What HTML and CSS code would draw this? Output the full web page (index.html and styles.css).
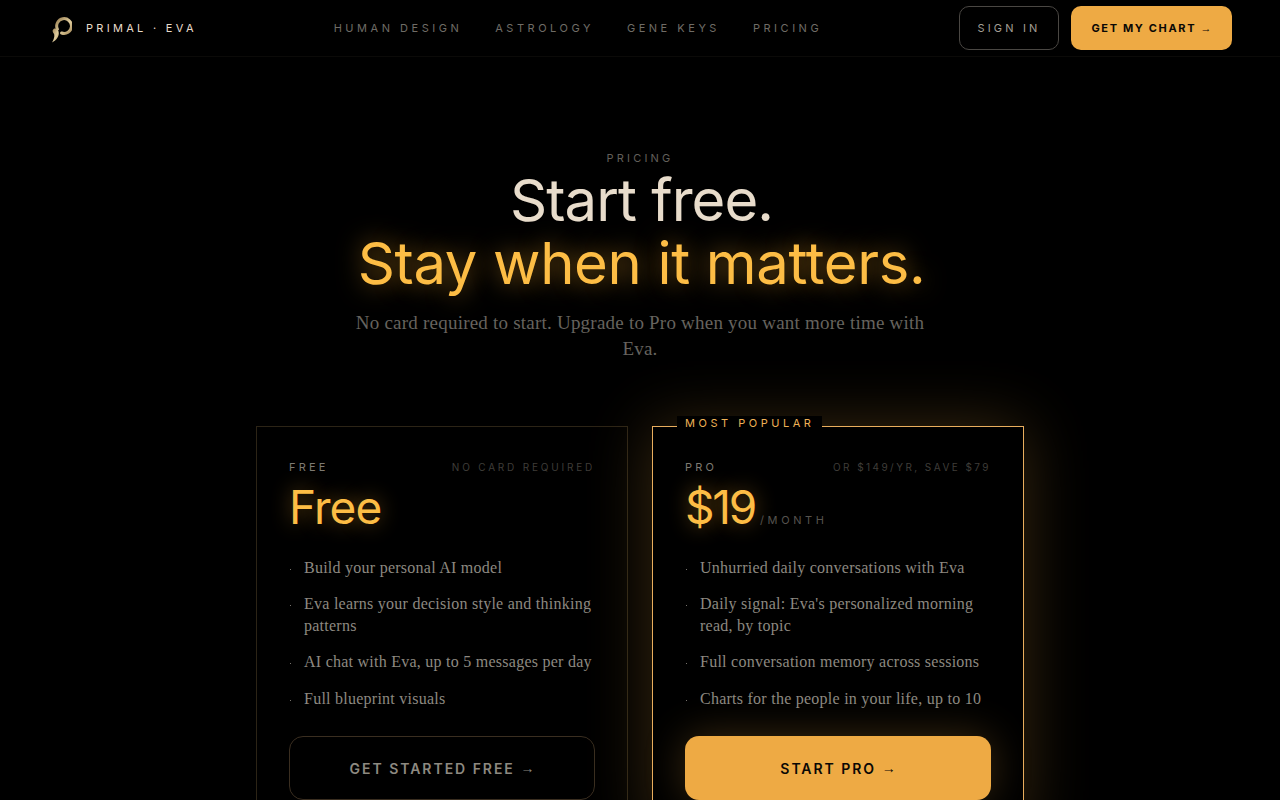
FILE: index.html
```html
<!DOCTYPE html>
<html lang="en">
<head>
  <meta charset="UTF-8">
  <title>Pricing - Primal Eva</title>
  <link rel="stylesheet" href="styles.css">
</head>
<body>
  <nav class="nav">
    <a class="brand" href="#">
      <svg class="brand-mark" width="24" height="28" viewBox="0 0 24 28" fill="none">
        <defs>
          <linearGradient id="gold" x1="0" y1="0" x2="1" y2="1">
            <stop offset="0" stop-color="#9a8052"/>
            <stop offset="0.55" stop-color="#e0cd9e"/>
            <stop offset="1" stop-color="#a88c5a"/>
          </linearGradient>
        </defs>
        <path d="M9.4 14.2A7.4 7.4 0 1 1 13.6 18" stroke="url(#gold)" stroke-width="3" stroke-linecap="round"/>
        <path d="M4.6 15.6C5.6 12.6 9.4 13 10.6 16.6C11.8 21 8.6 25.4 4 27.5C6 24.4 6.6 21.6 6.2 19.6C5.8 18.2 4.5 17.4 4.6 15.6Z" fill="url(#gold)"/>
      </svg>
      <span class="brand-name">PRIMAL · EVA</span>
    </a>
    <div class="nav-links">
      <a href="#">HUMAN DESIGN</a>
      <a href="#">ASTROLOGY</a>
      <a href="#">GENE KEYS</a>
      <a href="#">PRICING</a>
    </div>
    <div class="nav-actions">
      <a class="btn-signin" href="#">SIGN IN</a>
      <a class="btn-chart" href="#">GET MY CHART <span class="arrow">→</span></a>
    </div>
  </nav>

  <main>
    <section class="hero">
      <div class="eyebrow">PRICING</div>
      <h1>Start free.<br><span class="glow">Stay when it matters.</span></h1>
      <p class="sub">No card required to start. Upgrade to Pro when you want more time with Eva.</p>
    </section>

    <section class="plans">
      <div class="plan">
        <div class="plan-top">
          <span class="plan-name">FREE</span>
          <span class="plan-note">NO CARD REQUIRED</span>
        </div>
        <div class="price"><span class="amount">Free</span></div>
        <ul class="features">
          <li>Build your personal AI model</li>
          <li>Eva learns your decision style and thinking patterns</li>
          <li>AI chat with Eva, up to 5 messages per day</li>
          <li>Full blueprint visuals</li>
        </ul>
        <a class="cta cta-free" href="#">GET STARTED FREE <span class="arrow">→</span></a>
      </div>

      <div class="plan plan-pro">
        <div class="badge">MOST POPULAR</div>
        <div class="plan-top">
          <span class="plan-name">PRO</span>
          <span class="plan-note">OR $149/YR, SAVE $79</span>
        </div>
        <div class="price"><span class="amount">$19</span><span class="period">/MONTH</span></div>
        <ul class="features">
          <li>Unhurried daily conversations with Eva</li>
          <li>Daily signal: Eva's personalized morning read, by topic</li>
          <li>Full conversation memory across sessions</li>
          <li>Charts for the people in your life, up to 10</li>
        </ul>
        <a class="cta cta-pro" href="#">START PRO <span class="arrow">→</span></a>
      </div>
    </section>
  </main>
</body>
</html>
```

FILE: styles.css
```css
* {
  box-sizing: border-box;
}

body {
  margin: 0;
  background: #000;
  color: #e8dccb;
  font-family: "Inter", "Liberation Sans", sans-serif;
  overflow-x: hidden;
}

a {
  text-decoration: none;
  color: inherit;
}

/* top bar */
.nav {
  display: flex;
  align-items: center;
  justify-content: space-between;
  height: 57px;
  padding: 0 48px;
  border-bottom: 1px solid #0b0a08;
}

.brand {
  display: flex;
  align-items: center;
  gap: 14px;
}

.brand-mark {
  display: block;
  margin-top: 1px;
}

.brand-name {
  font-size: 11px;
  letter-spacing: 0.3em;
  color: #e8dccb;
}

.nav-links {
  display: flex;
  gap: 33px;
}

.nav-links a {
  font-size: 11px;
  letter-spacing: 0.32em;
  color: #6f6c66;
}

.nav-actions {
  display: flex;
  align-items: center;
  gap: 12px;
}

.btn-signin {
  display: flex;
  align-items: center;
  justify-content: center;
  width: 100px;
  height: 44px;
  border: 1px solid #4a4743;
  border-radius: 10px;
  font-size: 11px;
  letter-spacing: 0.29em;
  color: #a39e95;
}

.btn-chart {
  display: flex;
  align-items: center;
  justify-content: center;
  gap: 0.4em;
  width: 161px;
  height: 44px;
  border-radius: 10px;
  background: #eeaa44;
  font-size: 11px;
  font-weight: 700;
  letter-spacing: 0.15em;
  color: #0a0805;
}

.arrow {
  font-family: "Liberation Sans", sans-serif;
  font-weight: 400;
  letter-spacing: 0;
}

/* hero */
.hero {
  text-align: center;
  padding-top: 94px;
}

.eyebrow {
  font-size: 11px;
  line-height: 14px;
  letter-spacing: 0.29em;
  color: #625f5a;
}

h1 {
  margin: 4px 0 0;
  padding-left: 3px;
  font-size: 58px;
  font-weight: 400;
  line-height: 63px;
  letter-spacing: -0.017em;
  color: #e8dccb;
}

.glow {
  color: #fdbd45;
  letter-spacing: -0.006em;
  text-shadow: 0 0 24px rgba(253, 176, 50, 0.55);
}

.sub {
  width: 600px;
  margin: 15px auto 0;
  padding: 0 12px;
  font-family: "Liberation Serif", serif;
  font-size: 19px;
  line-height: 26px;
  letter-spacing: 0.22px;
  color: #66635e;
}

/* plans */
.plans {
  display: grid;
  grid-template-columns: 372px 372px;
  justify-content: center;
  gap: 24px;
  margin-top: 64px;
}

.plan {
  position: relative;
  padding: 32px;
  border: 1px solid #2c2416;
}

.plan-pro {
  border-color: #e9ae5e;
  box-shadow: 0 0 60px rgba(238, 170, 68, 0.24);
}

.badge {
  position: absolute;
  top: -11px;
  left: 24px;
  padding: 0 8px;
  background: #000;
  font-size: 11px;
  line-height: 15px;
  letter-spacing: 0.32em;
  color: #eeb155;
}

.plan-top {
  display: flex;
  justify-content: space-between;
  align-items: center;
  height: 16px;
}

.plan-name {
  font-size: 11px;
  letter-spacing: 0.29em;
  color: #7e7a72;
}

.plan-note {
  font-size: 10px;
  letter-spacing: 0.28em;
  color: #3f3d39;
}

.plan-pro .plan-note {
  letter-spacing: 0.245em;
}

.price {
  display: flex;
  align-items: baseline;
  height: 50px;
  margin-top: 7px;
  line-height: 50px;
}

.amount {
  font-size: 46px;
  font-weight: 400;
  letter-spacing: -0.02em;
  color: #fdbd45;
  text-shadow: 0 0 20px rgba(253, 176, 50, 0.45);
}

.plan-pro .amount {
  letter-spacing: -0.049em;
}

.period {
  margin-left: 5px;
  font-size: 11px;
  letter-spacing: 0.33em;
  color: #56534e;
}

.features {
  list-style: none;
  margin: 25px 0 26.6px;
  padding: 0;
  display: flex;
  flex-direction: column;
  gap: 14.2px;
}

.features li {
  position: relative;
  padding-left: 15px;
  font-family: "Liberation Serif", serif;
  font-size: 16px;
  line-height: 22px;
  letter-spacing: 0.25px;
  color: #8d8980;
}

.features li::before {
  content: "";
  position: absolute;
  left: 1px;
  top: 12px;
  width: 1px;
  height: 1px;
  background: #77736c;
}

.cta {
  display: flex;
  align-items: center;
  justify-content: center;
  gap: 0.4em;
  height: 64px;
  border-radius: 14px;
  font-size: 14px;
  font-weight: 600;
  letter-spacing: 0.14em;
}

.cta-free {
  border: 1px solid #3a2e20;
  color: #8d8980;
}

.cta-pro {
  background: #eeaa44;
  color: #0a0805;
  box-shadow: 0 0 40px rgba(238, 170, 68, 0.25);
}
```
